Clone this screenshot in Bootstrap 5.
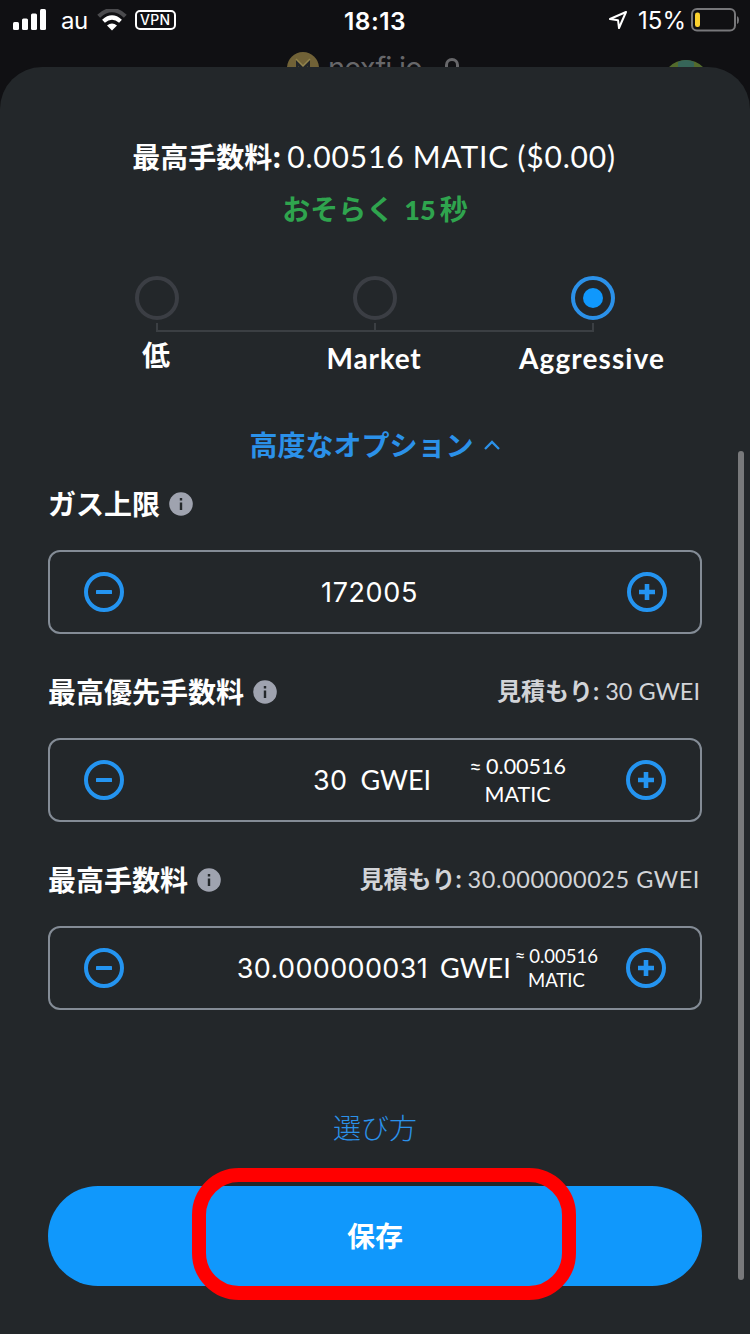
<!DOCTYPE html>
<html lang="ja">
<head>
<meta charset="utf-8">
<meta name="viewport" content="width=device-width, initial-scale=1">
<title>ガス設定</title>
<link href="https://cdn.jsdelivr.net/npm/bootstrap@5.3.0/dist/css/bootstrap.min.css" rel="stylesheet">
<style>
  html, body { height: 1334px; overflow: hidden; }
  body { background: #101013; color: #fff; font-family: Lato, "Noto Sans CJK JP", sans-serif; font-size: 28px; line-height: 1; }
  svg { display: block; flex: none; }
  .phone { width: 750px; height: 1334px; }
  .status { height: 40px; padding: 0 10px 0 13px; font-family: Inter, sans-serif; font-size: 24px; }
  .status > div { flex: 1 1 0; }
  .vpn { width: 41px; flex: none; height: 20px; border: 2px solid #fff; border-radius: 5px; font-size: 14px; font-weight: 500; letter-spacing: .3px; margin-left: 8px; }
  .clock { font-weight: 600; font-size: 24.5px; padding-top: 2px; margin-right: 3px; letter-spacing: .4px; }
  .behind { height: 27px; padding-left: 287px; }
  .site { font-family: Inter, sans-serif; font-size: 29px; color: #67676a; margin: 13px 0 0 9px; letter-spacing: -.8px; }
  .sheet { background: #23272a; border-radius: 42px 42px 0 0; padding: 64px 48px 0; }
  .jp { font-family: "Noto Sans CJK JP", sans-serif; }
  .h-title { height: 50px; padding-right: 2px; }
  .h-title .amount { font-size: 30px; letter-spacing: .8px; margin-left: 6px; }
  .h-time { height: 54px; margin-top: 1px; color: #2fa44e; font-weight: 700; }
  .h-time b { font-size: 27px; margin: 0 4px 0 10px; }
  .speed { margin-top: 40px; height: 102px; }
  .ring { width: 44px; height: 44px; border: 4px solid #3b3e44; border-radius: 50%; }
  .ring.on { border-color: #2b91e9; }
  .ring.on i { width: 20px; height: 20px; border-radius: 50%; background: #1098fc; }
  .rail { height: 9px; width: 438px; margin: 3px auto 0; border: solid #3b3f43; border-width: 0 2px 2px; }
  .rail i { width: 2px; background: #3b3f43; }
  .speed-label { height: 46px; font-weight: 700; padding-right: 2px; }
  .speed-label.latin { padding-top: 5px; letter-spacing: .8px; }
  .advanced { height: 44px; margin-top: 45px; color: #2b91e9; font-weight: 700; }
  .advanced svg, .field-head > svg { margin-left: 9px; }
  .field-head { height: 56px; font-weight: 700; }
  .estimate { color: #d2d4d8; font-size: 24px; padding: 0 2px 2px 0; }
  .estimate span { font-weight: 400; font-size: 23.5px; margin-left: 6px; }
  .stepper { height: 84px; margin: 18px 0 30px; border: 2px solid #848c96; border-radius: 12px; padding: 0 34px; }
  .num { font-family: Inter, sans-serif; font-size: 27px; letter-spacing: .35px; }
  .unit { font-size: 27px; padding-bottom: 2px; }
  .approx { font-size: 21.5px; line-height: 28px; word-spacing: -1px; margin: 0 60px 0 38px; }
  .approx.tight { font-size: 18.5px; line-height: 24px; margin: 0 28px 0 4px; }
  .how { height: 40px; margin-top: 98px; color: #2b91e9; font-weight: 300; text-decoration: none; }
  .save { height: 100px; margin-top: 38px; background: #1098fc; border: 0; font-size: 28px; font-weight: 700; color: #fff; }
  .callout { left: 144px; top: 20px; width: 384px; height: 132px; border: 14px solid #f00; border-radius: 47px; }
  .thumb { right: 6px; top: 384px; width: 6px; height: 829px; border-radius: 3px; background: #78797b; }
</style>
</head>
<body>
<svg width="0" height="0" class="position-absolute">
  <defs>
    <symbol id="minus" viewBox="0 0 40 40"><circle cx="20" cy="20" r="18" fill="none" stroke="#2494f0" stroke-width="4"/><rect x="12" y="18" width="16" height="4" rx=".6" fill="#2494f0"/></symbol>
    <symbol id="plus" viewBox="0 0 40 40"><circle cx="20" cy="20" r="18" fill="none" stroke="#2494f0" stroke-width="4"/><path d="M12 20h16M20 12v16" stroke="#2494f0" stroke-width="4.600"/></symbol>
    <symbol id="info" viewBox="0 0 24 24"><circle cx="12" cy="12" r="11.8" fill="#9fa3af"/><path d="M12 10.500V18M12 6v2.400" stroke="#24282b" stroke-width="2.400"/></symbol>
  </defs>
</svg>
<div class="phone d-flex flex-column overflow-hidden">
  <div class="status d-flex align-items-center">
    <div class="d-flex align-items-center">
      <svg width="34" height="22" fill="#fff"><rect y="13" width="6" height="8" rx="1.500"/><rect x="9" y="9.500" width="6" height="11.500" rx="1.500"/><rect x="18" y="4.500" width="6" height="16.500" rx="1.500"/><rect x="27" y="0" width="6" height="21" rx="1.500"/></svg>
      <span style="margin:2px 0 0 14px;letter-spacing:-.5px">au</span>
      <svg width="30" height="22" viewBox="0 0 30 22" style="margin-left:9px"><path d="M1.700 7.200Q15-5 28.300 7.200" fill="none" stroke="#4b4b4e" stroke-width="4.200"/><path d="M6.500 12.300Q15 4.800 23.500 12.300" fill="none" stroke="#fff" stroke-width="4.200"/><path d="M15 21.500l-5-5q5-4 10 0z" fill="#fff"/></svg>
      <span class="vpn d-flex align-items-center justify-content-center">VPN</span>
    </div>
    <span class="clock">18:13</span>
    <div class="d-flex align-items-center justify-content-end">
      <svg width="20" height="20" viewBox="0 0 20 20"><path d="M18 2L2 9l8 1.200L11 18z" fill="none" stroke="#fff" stroke-width="2" stroke-linejoin="round"/></svg>
      <span style="margin:2px 5px 0 10px">15%</span>
      <svg width="49" height="24" viewBox="0 0 49 24"><rect x="1" y="1" width="43" height="21.500" rx="5" fill="none" stroke="#77777a" stroke-width="2"/><rect x="4" y="4.500" width="5" height="14.500" rx="2.200" fill="#fbd12e"/><path d="M46 8q2 1 2 4t-2 4z" fill="#77777a"/></svg>
    </div>
  </div>
  <div class="behind d-flex align-items-start overflow-hidden">
    <svg width="32" height="32" viewBox="0 0 32 32" style="margin-top:12px"><circle cx="16" cy="16" r="16" fill="#716237"/><path d="M9 7l7 7 7-7v14H9z" fill="#222528"/><path d="M9 7l7 7 7-7M11 15l5 5 5-5" fill="none" stroke="#92844d" stroke-width="1.500"/></svg>
    <span class="site text-nowrap">nexfi.io</span>
    <svg width="16" height="22" viewBox="0 0 16 22" style="margin:17px 0 0 22px"><path d="M2.500 22V8a5.500 5.500 0 0 1 11 0v14" fill="none" stroke="#67676a" stroke-width="3"/></svg>
    <svg width="48" height="48" viewBox="0 0 48 48" style="margin:20px 40px 0 auto"><circle cx="24" cy="24" r="24" fill="#536b2c"/><path d="M16 2q8-4 16 0v12H16z" fill="#366558"/></svg>
  </div>
  <main class="sheet flex-grow-1 position-relative">
    <div class="h-title d-flex align-items-center justify-content-center text-nowrap"><span class="jp fw-bold">最高手数料:</span><span class="amount">0.00516 MATIC ($0.00)</span></div>
    <div class="h-time d-flex align-items-center justify-content-center text-nowrap">おそらく<b>15</b>秒</div>
    <div class="speed">
      <div class="row g-0">
        <div class="col-4 d-flex justify-content-center"><span class="ring"></span></div>
        <div class="col-4 d-flex justify-content-center"><span class="ring"></span></div>
        <div class="col-4 d-flex justify-content-center"><span class="ring on d-flex align-items-center justify-content-center"><i></i></span></div>
      </div>
      <div class="rail d-flex justify-content-center"><i></i></div>
      <div class="row g-0 text-center text-nowrap">
        <div class="col-4 speed-label d-flex align-items-center justify-content-center">低</div>
        <div class="col-4 speed-label latin d-flex align-items-center justify-content-center">Market</div>
        <div class="col-4 speed-label latin d-flex align-items-center justify-content-center" style="letter-spacing:1.1px">Aggressive</div>
      </div>
    </div>
    <div class="advanced d-flex align-items-center justify-content-center text-nowrap">高度なオプション<svg width="18" height="12" viewBox="0 0 18 12"><path d="M2 10l7-7 7 7" fill="none" stroke="#2b91e9" stroke-width="2.300"/></svg></div>

    <div class="field-head d-flex align-items-center" style="margin-top:9px"><span>ガス上限</span><svg width="24" height="24"><use href="#info"/></svg></div>
    <div class="stepper d-flex align-items-center" style="padding-right:33px">
      <svg width="40" height="40"><use href="#minus"/></svg>
      <span class="num flex-grow-1 text-center" style="letter-spacing:.6px;padding-right:12px">172005</span>
      <svg width="40" height="40"><use href="#plus"/></svg>
    </div>

    <div class="field-head d-flex align-items-center"><span>最高優先手数料</span><svg width="24" height="24"><use href="#info"/></svg><div class="estimate ms-auto text-nowrap">見積もり:<span>30 GWEI</span></div></div>
    <div class="stepper d-flex align-items-center">
      <svg width="40" height="40"><use href="#minus"/></svg>
      <span class="num ms-auto">30</span>
      <span class="unit" style="margin-left:13px">GWEI</span>
      <div class="approx text-center text-nowrap">≈ 0.00516<br>MATIC</div>
      <svg width="40" height="40"><use href="#plus"/></svg>
    </div>

    <div class="field-head d-flex align-items-center"><span>最高手数料</span><svg width="24" height="24"><use href="#info"/></svg><div class="estimate ms-auto text-nowrap">見積もり:<span style="letter-spacing:.55px">30.000000025 GWEI</span></div></div>
    <div class="stepper d-flex align-items-center">
      <svg width="40" height="40"><use href="#minus"/></svg>
      <span class="num ms-auto">30.000000031</span>
      <span class="unit" style="margin-left:12px">GWEI</span>
      <div class="approx tight text-center text-nowrap">≈ 0.00516<br>MATIC</div>
      <svg width="40" height="40"><use href="#plus"/></svg>
    </div>

    <a class="how d-flex align-items-center justify-content-center" href="#">選び方</a>
    <div class="position-relative">
      <button class="save btn rounded-pill w-100">保存</button>
      <div class="callout position-absolute"></div>
    </div>
    <div class="thumb position-absolute"></div>
  </main>
</div>
<script src="https://cdn.jsdelivr.net/npm/bootstrap@5.3.0/dist/js/bootstrap.bundle.min.js"></script>
</body>
</html>
